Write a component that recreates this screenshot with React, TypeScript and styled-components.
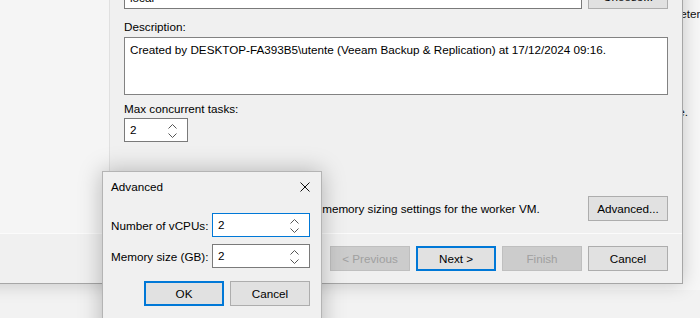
import styled, { createGlobalStyle } from 'styled-components';

const GlobalStyle = createGlobalStyle`
  html, body {
    margin: 0;
    padding: 0;
  }
  body {
    font-family: 'Liberation Sans', Arial, sans-serif;
    font-size: 11.7px;
    color: #000;
  }
  * {
    box-sizing: border-box;
  }
`;

type Variant = 'normal' | 'primary' | 'disabled';

const Desktop = styled.div`
  position: relative;
  width: 700px;
  height: 318px;
  overflow: hidden;
  background: #f2f2f2;
`;

const BackWindow = styled.div`
  position: absolute;
  left: 600px;
  top: 0;
  width: 200px;
  height: 290px;
  background: #f7f7f7;
  padding: 6px 0 0 47px;
  display: flex;
  flex-direction: column;
  gap: 82px;
  line-height: 16px;
  color: #111;
`;

const Wizard = styled.div`
  position: absolute;
  left: -20px;
  top: -60px;
  width: 703px;
  height: 344px;
  display: flex;
  flex-direction: column;
  background: #f0f0f0;
  border: 1px solid #a6a6a6;
  box-shadow: 0 0 18px rgba(0, 0, 0, 0.2);
`;

const WizardBody = styled.div`
  flex: 1;
  display: flex;
  min-height: 0;
`;

const StepsPane = styled.div`
  width: 129px;
  background: #f5f5f5;
  border-right: 1px solid #e0e0e0;
`;

const ContentPane = styled.div`
  flex: 1;
  display: flex;
  flex-direction: column;
  padding: 43px 14px 12px 14px;
`;

const Row = styled.div<{ $top?: number }>`
  display: flex;
  align-items: flex-end;
  gap: 6px;
  margin-top: ${(p) => p.$top ?? 0}px;
`;

const Label = styled.div<{ $top?: number }>`
  line-height: 16px;
  margin-top: ${(p) => p.$top ?? 0}px;
`;

const TextBox = styled.div`
  flex: 1;
  height: 23px;
  background: #fff;
  border: 1px solid #7a7a7a;
  padding: 3px 5px;
  line-height: 16px;
`;

const Memo = styled.div`
  height: 58px;
  margin-top: 2px;
  background: #fff;
  border: 1px solid #828282;
  padding: 4px 5px;
  line-height: 16px;
`;

const SpinBox = styled.div<{ $width: number; $focused?: boolean; $top?: number }>`
  width: ${(p) => p.$width}px;
  height: 24px;
  margin-top: ${(p) => p.$top ?? 0}px;
  display: flex;
  align-items: center;
  background: #fff;
  border: 1px solid ${(p) => (p.$focused ? '#0078d7' : '#7a7a7a')};
  padding: 0 10px 0 5px;
`;

const SpinValue = styled.span`
  flex: 1;
  line-height: 16px;
`;

const SpinArrows = styled.div`
  display: flex;
  flex-direction: column;
  gap: 4px;
  margin-top: 1px;
`;

const Spacer = styled.div`
  flex: 1;
`;

const Hint = styled.div`
  flex: 1;
  align-self: center;
  line-height: 16px;
`;

const Button = styled.div<{ $variant?: Variant }>`
  width: 80px;
  height: 25px;
  flex-shrink: 0;
  display: flex;
  align-items: center;
  justify-content: center;
  background: ${(p) => (p.$variant === 'disabled' ? '#cccccc' : '#e1e1e1')};
  border: ${(p) =>
    p.$variant === 'primary'
      ? '2px solid #0078d7'
      : p.$variant === 'disabled'
      ? '1px solid #bfbfbf'
      : '1px solid #adadad'};
  color: ${(p) => (p.$variant === 'disabled' ? '#a0a0a0' : '#000')};
`;

const Footer = styled.div`
  height: 50px;
  display: flex;
  justify-content: flex-end;
  gap: 6px;
  padding: 12px 14px 0 0;
  border-top: 1px solid #fbfbfb;
`;

const Dialog = styled.div`
  position: absolute;
  left: 102px;
  top: 171px;
  width: 220px;
  height: 170px;
  background: #f0f0f0;
  border: 1px solid #b4b4b4;
  box-shadow: 0 0 22px rgba(0, 0, 0, 0.26);
`;

const TitleBar = styled.div`
  height: 30px;
  display: flex;
  align-items: center;
  padding-left: 8px;
`;

const Title = styled.div`
  flex: 1;
  line-height: 16px;
`;

const CloseButton = styled.div`
  width: 32px;
  height: 30px;
  display: flex;
  align-items: center;
  justify-content: center;
`;

const DialogBody = styled.div`
  padding: 11px 11px 0 8px;
`;

const FieldGrid = styled.div`
  display: grid;
  grid-template-columns: 1fr 98px;
  row-gap: 7px;
  align-items: center;
`;

const DialogButtons = styled.div`
  display: flex;
  justify-content: flex-end;
  gap: 6px;
  margin-top: 13px;
`;

const Chevron = ({ up }: { up?: boolean }) => (
  <svg width="9" height="5" viewBox="0 0 9 5">
    <path
      d={up ? 'M0.5 4.5 L4.5 0.5 L8.5 4.5' : 'M0.5 0.5 L4.5 4.5 L8.5 0.5'}
      fill="none"
      stroke="#555"
      strokeWidth="1"
    />
  </svg>
);

const Spinner = ({
  value,
  width,
  focused,
  top,
}: {
  value: string;
  width: number;
  focused?: boolean;
  top?: number;
}) => (
  <SpinBox $width={width} $focused={focused} $top={top}>
    <SpinValue>{value}</SpinValue>
    <SpinArrows>
      <Chevron up />
      <Chevron />
    </SpinArrows>
  </SpinBox>
);

export default function App() {
  return (
    <Desktop>
      <GlobalStyle />
      <BackWindow>
        <div>parameters</div>
        <div>volume.</div>
      </BackWindow>

      <Wizard>
        <WizardBody>
          <StepsPane />
          <ContentPane>
            <Row>
              <TextBox>local</TextBox>
              <Button>Choose...</Button>
            </Row>
            <Label $top={10}>Description:</Label>
            <Memo>
              Created by DESKTOP-FA393B5\utente (Veeam Backup &amp; Replication) at 17/12/2024 09:16.
            </Memo>
            <Label $top={6}>Max concurrent tasks:</Label>
            <Spinner value="2" width={64} top={1} />
            <Spacer />
            <Row>
              <Hint>Click Advanced to configure CPU and memory sizing settings for the worker VM.</Hint>
              <Button>Advanced...</Button>
            </Row>
          </ContentPane>
        </WizardBody>
        <Footer>
          <Button $variant="disabled">&lt; Previous</Button>
          <Button $variant="primary">Next &gt;</Button>
          <Button $variant="disabled">Finish</Button>
          <Button>Cancel</Button>
        </Footer>
      </Wizard>

      <Dialog>
        <TitleBar>
          <Title>Advanced</Title>
          <CloseButton>
            <svg width="10" height="10" viewBox="0 0 10 10">
              <path d="M0.5 0.5 L9.5 9.5 M9.5 0.5 L0.5 9.5" stroke="#111" strokeWidth="1" />
            </svg>
          </CloseButton>
        </TitleBar>
        <DialogBody>
          <FieldGrid>
            <span>Number of vCPUs:</span>
            <Spinner value="2" width={98} focused />
            <span>Memory size (GB):</span>
            <Spinner value="2" width={98} />
          </FieldGrid>
          <DialogButtons>
            <Button $variant="primary">OK</Button>
            <Button>Cancel</Button>
          </DialogButtons>
        </DialogBody>
      </Dialog>
    </Desktop>
  );
}
